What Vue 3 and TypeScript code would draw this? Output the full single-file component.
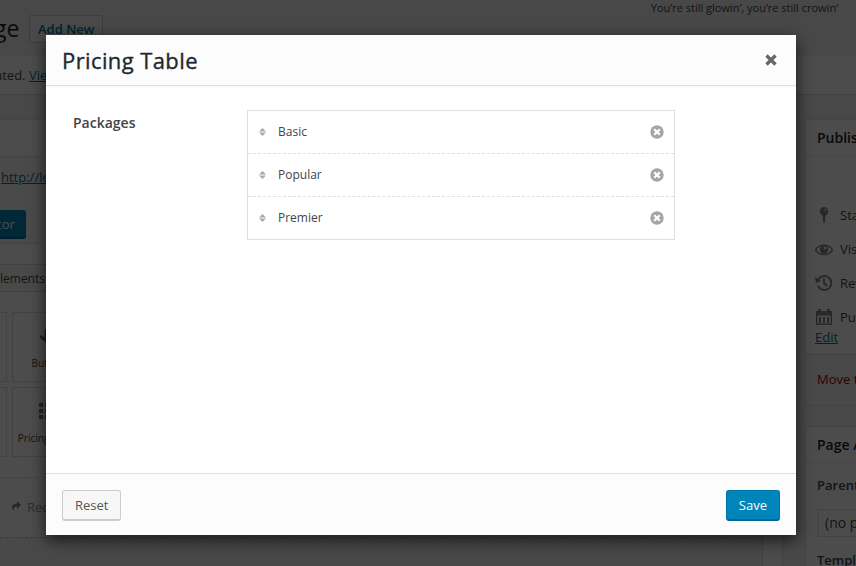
<script setup lang="ts">
import { ref } from 'vue'

const defaults: string[] = ['Basic', 'Popular', 'Premier']
const packages = ref<string[]>([...defaults])
const open = ref(true)

function remove(index: number): void {
  packages.value.splice(index, 1)
}
function reset(): void {
  packages.value = [...defaults]
}
</script>

<template>
  <div class="screen">
    <div class="admin">
      <header class="top">
        <div class="heading"><span class="page-title">ge</span><a class="add-new">Add New</a></div>
        <span class="lyric">You’re still glowin’, you’re still crowin’</span>
      </header>
      <div class="notice"><span>ated. </span><a>View</a></div>
      <div class="columns">
        <main class="editor">
          <div class="title-field"></div>
          <div class="permalink">
            <a class="link">http://localhost</a>
            <span class="editor-btn">tor</span>
          </div>
          <div class="strip"></div>
          <div class="tabs">lements</div>
          <div class="elements">
            <div class="tile stub"></div>
            <div class="tile">
              <svg width="20" height="20" viewBox="0 0 20 20"><path d="M6.500 1h6v9l4-3 1 2.500L10 16.500 1.500 9.500l1-2.500 4 2z" fill="currentColor" /></svg>
              <span>Button</span>
            </div>
            <div class="tile stub"></div>
            <div class="tile">
              <svg width="20" height="20" viewBox="0 0 20 20"><path d="M1 0h4v4H1zM7 0h4v4H7zM13 0h4v4h-4zM1 6h4v4H1zM7 6h4v4H7zM13 6h4v4h-4zM1 12h4v4H1zM7 12h4v4H7zM13 12h4v4h-4z" fill="currentColor" /></svg>
              <span>Pricing Table</span>
            </div>
          </div>
          <div class="history">
            <svg width="10" height="11" viewBox="0 0 10 11"><path d="M6 0l4 4-4 4V5.500C3.500 5.300 2.200 6.500 3 10 0 7.500-.3 2.700 6 2.500z" fill="currentColor" /></svg>
            <span>Redo</span>
          </div>
          <div class="canvas"></div>
        </main>
        <aside class="side">
          <section class="box publish">
            <h3>Publish</h3>
            <div class="meta">
              <div class="line">
                <svg width="18" height="18" viewBox="0 0 18 18"><path d="M9 1a4.300 4.300 0 0 1 1.500 8.300L9.800 17H8.300L7.500 9.300A4.300 4.300 0 0 1 9 1z" fill="currentColor" /><circle cx="10.500" cy="3.800" r="1" fill="#fff" /></svg>
                <span>Status</span>
              </div>
              <div class="line">
                <svg width="18" height="18" viewBox="0 0 18 18"><path d="M.5 10C4 3.500 14 3.500 17.500 10 14 16 4 16 .5 10z" fill="none" stroke="currentColor" stroke-width="1.400" /><circle cx="9" cy="9.500" r="4.200" fill="currentColor" /><circle cx="10" cy="8" r="1.300" fill="#fff" /></svg>
                <span>Visibility</span>
              </div>
              <div class="line">
                <svg width="18" height="18" viewBox="0 0 18 18"><path d="M3 6a7 7 0 1 1 0 6M9 4.500V9l3 3" fill="none" stroke="currentColor" stroke-width="2" /><path d="M0 3l1 6 5-2z" fill="currentColor" /></svg>
                <span>Revisions</span>
              </div>
              <div class="line">
                <svg width="18" height="18" viewBox="0 0 18 18"><path d="M1 3h2V1h3v2h6V1h3v2h2v14H1zm1.500 4.500v8h13v-8z" fill="currentColor" fill-rule="evenodd" /><path d="M5 9v6M9 9v6M13 9v6" stroke="currentColor" stroke-width="2" /></svg>
                <span>Published</span>
              </div>
              <a class="edit">Edit</a>
            </div>
            <div class="trash">Move to Trash</div>
          </section>
          <section class="box">
            <h3>Page Attributes</h3>
            <div class="attributes">
              <b>Parent</b>
              <div class="select">(no parent)</div>
              <b>Template</b>
            </div>
          </section>
        </aside>
      </div>
    </div>

    <div v-if="open" class="backdrop">
      <div class="modal">
        <header class="modal-head">
          <h2>Pricing Table</h2>
          <button class="close" aria-label="Close" @click="open = false">
            <svg width="12" height="12" viewBox="0 0 12 12"><path d="M1.500 1.500l9 9M10.500 1.500l-9 9" stroke="currentColor" stroke-width="3.300" /></svg>
          </button>
        </header>
        <div class="modal-body">
          <label>Packages</label>
          <ul>
            <li v-for="(name, i) in packages" :key="name">
              <svg class="handle" width="7" height="8" viewBox="0 0 7 8"><path d="M3.500 0L7 3.500H0zM0 4.500h7L3.500 8z" fill="currentColor" /></svg>
              <span>{{ name }}</span>
              <button aria-label="Remove" @click="remove(i)">
                <svg width="14" height="14" viewBox="0 0 14 14"><circle cx="7" cy="7" r="6.700" fill="#a5a5a5" /><path d="M4.200 4.200l5.600 5.600M9.800 4.200L4.200 9.800" stroke="#fff" stroke-width="2.300" /></svg>
              </button>
            </li>
          </ul>
        </div>
        <footer class="modal-foot">
          <button class="btn" @click="reset">Reset</button>
          <button class="btn primary" @click="open = false">Save</button>
        </footer>
      </div>
    </div>
  </div>
</template>

<style>
body { overflow: hidden; }
</style>

<style scoped>
* { box-sizing: border-box; }
.screen {
  position: relative;
  width: 856px;
  height: 566px;
  overflow: hidden;
  font: 13px/18px "Open Sans", sans-serif;
  color: #444;
}
.admin { height: 566px; background: #f1f1f1; white-space: nowrap; }
.admin a { color: #0074a2; text-decoration: underline; }
.top { height: 56px; display: flex; justify-content: space-between; padding-right: 18px; }
.heading { display: flex; align-items: flex-start; padding-top: 15px; }
.page-title { font-size: 23px; line-height: 27px; color: #222; margin-left: -6px; width: 35px; }
.admin .add-new {
  height: 28px;
  padding: 0 8px;
  border: 1px solid #ccc;
  border-radius: 2px;
  background: #f7f7f7;
  font-weight: 600;
  line-height: 27px;
  text-decoration: none;
}
.lyric { font-size: 11px; line-height: 16px; }
.notice { height: 39px; padding-top: 10px; background: #fff; border-bottom: 1px solid #ddd; }
.notice span { margin-left: -5px; white-space: pre; }
.columns { display: flex; gap: 22px; }
.editor { flex: none; width: 783px; height: 447px; margin-top: 24px; background: #fff; border: solid #e5e5e5; border-width: 1px 1px 0 0; }
.title-field { height: 37px; border-bottom: 1px solid #e5e5e5; }
.permalink { height: 87px; padding-top: 11px; background: #f7f7f7; border-bottom: 1px solid #e5e5e5; }
.link { display: block; padding-left: 1px; }
.editor-btn {
  display: block;
  width: 26px;
  height: 29px;
  margin-top: 24px;
  line-height: 28px;
  color: #fff;
  background: #0085ba;
  border-radius: 0 3px 3px 0;
  border-bottom: 2px solid #006799;
  text-indent: -3px;
}
.strip { height: 20px; background: #fff; }
.tabs { height: 28px; font-size: 12px; line-height: 28px; background: #f5f5f5; border: solid #d5d5d5; border-width: 1px 0; }
.elements { display: grid; grid-template-columns: 7px 71px; grid-auto-rows: 70px; gap: 5px; padding: 20px 0; }
.tile { display: flex; flex-direction: column; align-items: center; padding-top: 15px; border: 1px solid #ddd; font-size: 10px; line-height: 14px; }
.tile svg { margin-bottom: 8px; color: #777; }
.tile.stub { border-left: 0; }
.history { height: 60px; padding: 0 0 2px 11px; display: flex; align-items: center; gap: 6px; border-top: 1px solid #e8e8e8; color: #999; }
.history svg { color: #888; }
.canvas { width: 763px; height: 40px; background: #f3f6f9; border: dashed #c8c8c8; border-width: 1px 1px 0 0; }
.side { width: 260px; flex: none; margin-top: 24px; }
.box { background: #fff; border: 1px solid #e5e5e5; margin-bottom: 20px; }
.box h3 { margin: 0; height: 36px; padding-left: 11px; border-bottom: 1px solid #eee; font-size: 14px; line-height: 35px; font-weight: 600; color: #222; }
.publish { height: 287px; }
.meta { height: 198px; padding: 42px 0 0 9px; }
.line { height: 34px; display: flex; align-items: center; gap: 7px; }
.line svg { color: #888; }
.edit { display: block; margin-top: -6px; }
.trash { height: 51px; padding-left: 11px; line-height: 48px; border-top: 1px solid #ddd; background: #f5f5f5; color: #a00; }
.attributes { padding: 13px 11px; }
.attributes b { display: block; font-weight: 600; }
.select { height: 28px; margin: 15px 0 14px 1px; padding-left: 6px; border: 1px solid #ddd; font-size: 14px; line-height: 26px; }

.backdrop { position: absolute; inset: 0; padding: 35px 60px 0 46px; background: rgba(0, 0, 0, .7); }
.modal { display: flex; flex-direction: column; width: 750px; height: 500px; background: #fff; box-shadow: 0 5px 15px rgba(0, 0, 0, .7); }
.modal-head { display: flex; justify-content: space-between; align-items: center; height: 51px; padding: 0 19px 0 16px; background: #fcfcfc; border-bottom: 1px solid #dfdfdf; box-shadow: 0 1px 2px rgba(0, 0, 0, .04); }
h2 { margin: -1px 0 0; font-size: 22px; line-height: 30px; font-weight: 400; letter-spacing: .4px; -webkit-text-stroke: .35px #23282d; color: #23282d; }
button { font: inherit; cursor: pointer; }
.close, li button { display: flex; padding: 0; border: 0; background: none; }
.close { color: #666; }
.modal-body { flex: 1; display: flex; align-items: flex-start; padding: 24px 27px; }
label { width: 174px; padding-top: 4px; font-size: 14px; font-weight: 600; }
ul { width: 428px; margin: 0; padding: 0; list-style: none; border: 1px solid #dfdfdf; }
li { display: flex; align-items: center; height: 43px; padding: 0 10px 0 11px; font-size: 12px; }
li:first-child { height: 42px; }
li + li { border-top: 1px dashed #dfdfdf; }
li span { flex: 1; margin-left: 12px; }
.handle { color: #aaa; }
.modal-foot { display: flex; justify-content: space-between; height: 62px; padding: 16px; background: #fcfcfc; border-top: 1px solid #dfdfdf; }
.btn { height: 31px; padding: 0 12px; border: 1px solid #ccc; border-bottom-width: 2px; border-radius: 3px; background: #f7f7f7; color: #555; line-height: 28px; }
.primary { border-color: #0073aa #0073aa #006799; background: #0085ba; color: #fff; }
</style>
